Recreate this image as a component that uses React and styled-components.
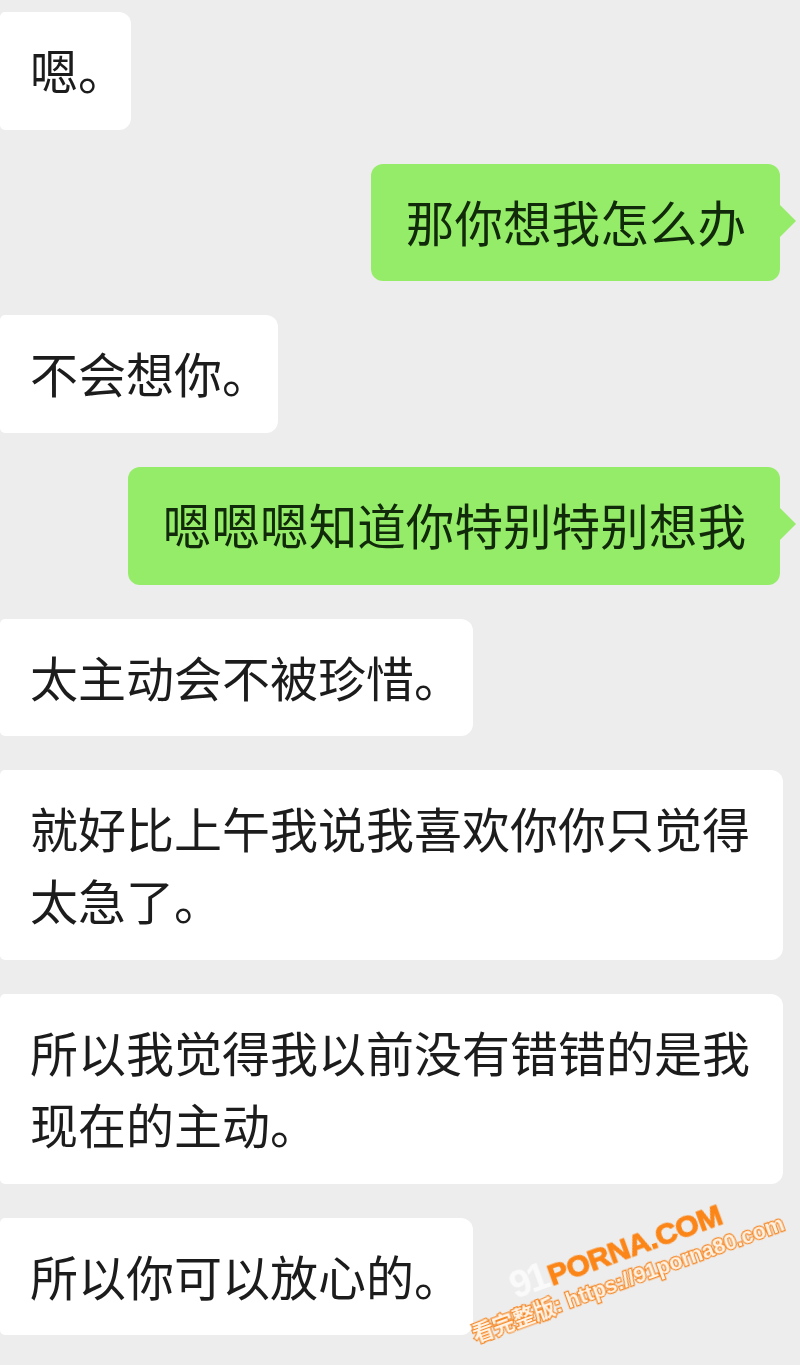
import React from "react";
import styled, { createGlobalStyle } from "styled-components";

const Global = createGlobalStyle`
  html, body { margin: 0; padding: 0; background: #ededed; }
`;

const Page = styled.div`
  position: relative;
  width: 800px;
  height: 1365px;
  overflow: hidden;
  box-sizing: border-box;
  padding-top: 12px;
  background: #ededed;
  display: flex;
  flex-direction: column;
  gap: 34.1px;
  font-family: "Noto Sans CJK SC", "Noto Sans", sans-serif;
`;

const Bubble = styled.div`
  position: relative;
  box-sizing: border-box;
  width: fit-content;
  font-size: 48px;
  line-height: 72px;
  padding: 21px 31px 24.6px 30px;
  color: #1c1c1c;
  filter: blur(0.5px);
`;

const Incoming = styled(Bubble)`
  max-width: 783px;
  background: #ffffff;
  border-radius: 5px 12px 12px 5px;
  padding-right: ${(p) => p.$endPad ?? 31}px;
`;

const Outgoing = styled(Bubble)`
  align-self: flex-end;
  margin-right: 20px;
  background: #95ec69;
  border-radius: 12px;
  font-size: 48.6px;
  color: #102a0a;
  padding-left: 35px;
  padding-right: 34px;
  &::after {
    content: "";
    position: absolute;
    right: -16px;
    top: 41px;
    border-left: 16px solid #95ec69;
    border-top: 16px solid transparent;
    border-bottom: 16px solid transparent;
  }
`;

const Watermark = styled.div`
  position: absolute;
  left: 478px;
  top: 1286px;
  width: 350px;
  transform: rotate(-20deg);
  transform-origin: 0 100%;
  font-family: "Liberation Sans", "Noto Sans CJK SC", sans-serif;
  font-weight: 700;
  display: flex;
  flex-direction: column;
  filter: blur(0.3px);
`;

const Brand = styled.div`
  display: flex;
  align-items: baseline;
  margin-left: 52px;
  line-height: 32px;
`;

const BrandNum = styled.span`
  font-size: 38px;
  letter-spacing: -3px;
  margin-right: 3px;
  color: #fafafa;
`;

const BrandName = styled.span`
  font-size: 30px;
  letter-spacing: -0.4px;
  color: #fb8517;
  -webkit-text-stroke: 1px #fb8517;
`;

const Site = styled.div`
  font-size: 21.6px;
  line-height: 28px;
  white-space: nowrap;
  color: #fff3e6;
  -webkit-text-stroke: 2.4px #f58a2a;
  paint-order: stroke fill;
`;

export default function App() {
  return (
    <Page>
      <Global />
      <Incoming $endPad={5}>嗯。</Incoming>
      <Outgoing>那你想我怎么办</Outgoing>
      <Incoming $endPad={8}>不会想你。</Incoming>
      <Outgoing>嗯嗯嗯知道你特别特别想我</Outgoing>
      <Incoming $endPad={11}>太主动会不被珍惜。</Incoming>
      <Incoming>就好比上午我说我喜欢你你只觉得太急了。</Incoming>
      <Incoming>所以我觉得我以前没有错错的是我现在的主动。</Incoming>
      <Incoming $endPad={11}>所以你可以放心的。</Incoming>
      <Watermark>
        <Brand>
          <BrandNum>91</BrandNum>
          <BrandName>PORNA.COM</BrandName>
        </Brand>
        <Site>看完整版: https://91porna80.com</Site>
      </Watermark>
    </Page>
  );
}
